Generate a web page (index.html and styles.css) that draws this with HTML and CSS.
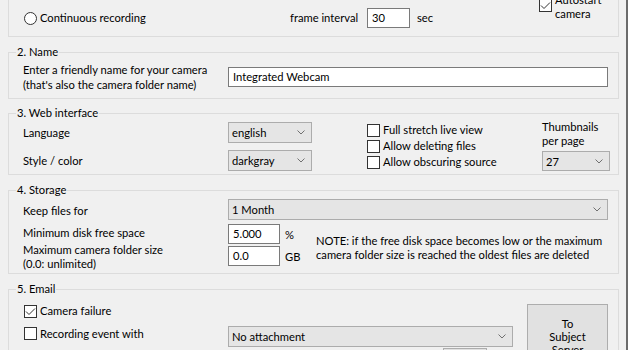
FILE: index.html
```html
<!DOCTYPE html>
<html>

<head>
    <title>Camera settings</title>
    <link rel="stylesheet" href="styles.css">
</head>

<body>
    <div class="panel">

        <!-- 1. Recording (scrolled, top hidden) -->
        <div class="group group-top">
            <div class="rec-row">
                <label class="rec-mode"><span class="radio"></span>Continuous recording</label>
                <span class="frame-label">frame interval</span>
                <span class="field interval">30</span>
                <span class="unit-sec">sec</span>
                <label class="autostart">
                    <span class="box"><svg width="11" height="11" viewBox="0 0 11 11"><polyline points="1,5.5 4,8.5 10,2.5" /></svg></span>
                    <span>Autostart<br>camera</span>
                </label>
            </div>
        </div>

        <!-- 2. Name -->
        <fieldset class="group g-name">
            <legend>2. Name</legend>
            <div class="name-row">
                <div>Enter a friendly name for your camera<br>(that's also the camera folder name)</div>
                <span class="field">Integrated Webcam</span>
            </div>
        </fieldset>

        <!-- 3. Web interface -->
        <fieldset class="group g-web">
            <legend>3. Web interface</legend>
            <div class="web-row">
                <div class="web-left">
                    <span>Language</span>
                    <span class="select">english<svg width="8" height="5" viewBox="0 0 8 5"><polyline points="0.5,0.5 4,4 7.5,0.5" /></svg></span>
                    <span>Style / color</span>
                    <span class="select">darkgray<svg width="8" height="5" viewBox="0 0 8 5"><polyline points="0.5,0.5 4,4 7.5,0.5" /></svg></span>
                </div>
                <div class="checks">
                    <label class="check-line"><span class="box"></span>Full stretch live view</label>
                    <label class="check-line"><span class="box"></span>Allow deleting files</label>
                    <label class="check-line"><span class="box"></span>Allow obscuring source</label>
                </div>
                <div class="thumbs">
                    <div class="thumbs-label">Thumbnails<br>per page</div>
                    <span class="select">27<svg width="8" height="5" viewBox="0 0 8 5"><polyline points="0.5,0.5 4,4 7.5,0.5" /></svg></span>
                </div>
            </div>
        </fieldset>

        <!-- 4. Storage -->
        <fieldset class="group g-storage">
            <legend>4. Storage</legend>
            <div class="storage-grid">
                <span class="keep-label">Keep files for</span>
                <span class="select keep-select">1 Month<svg width="8" height="5" viewBox="0 0 8 5"><polyline points="0.5,0.5 4,4 7.5,0.5" /></svg></span>

                <span class="min-label">Minimum disk free space</span>
                <span class="field">5.000</span>
                <span class="unit">%</span>
                <div class="note">NOTE: if the free disk space becomes low or the maximum<br>camera folder size is reached the oldest files are deleted</div>

                <span class="max-label">Maximum camera folder size<br>(0.0: unlimited)</span>
                <span class="field">0.0</span>
                <span class="unit">GB</span>
            </div>
        </fieldset>

        <!-- 5. Email -->
        <fieldset class="group g-email">
            <legend>5. Email</legend>
            <div class="email-grid">
                <label class="check-line fail-line"><span class="box"><svg width="11" height="11" viewBox="0 0 11 11"><polyline points="1,5.5 4,8.5 10,2.5" /></svg></span>Camera failure</label>
                <button class="subject-btn">To<br>Subject<br>Server</button>
                <label class="check-line event-line"><span class="box"></span>Recording event with</label>
                <span class="select attach-select">No attachment<svg width="8" height="5" viewBox="0 0 8 5"><polyline points="0.5,0.5 4,4 7.5,0.5" /></svg></span>
                <span class="small-btn"></span>
            </div>
        </fieldset>

    </div>
</body>

</html>
```

FILE: styles.css
```css
body {
    margin: 0;
    height: 350px;
    overflow: hidden;
    background-color: #f0f0f0;
    font-family: Lato, "Liberation Sans", sans-serif;
    font-size: 11.2px;
    color: #000;
}

.panel {
    height: 350px;
    overflow: hidden;
    padding: 0 7px 0 8px;
    border-right: 2px solid #6b6b6b;
}

.group {
    border: 1px solid #dcdcdc;
    padding: 0 8px 0 7px;
    margin: 7px 0 0;
    min-width: 0;
}

.group legend {
    padding: 0 1px;
    line-height: 16px;
}

.group-top {
    border-top: none;
    margin-top: 0;
    height: 36px;
}

/* shared controls */

.field {
    display: block;
    height: 20px;
    box-sizing: border-box;
    background-color: #fff;
    border: 1px solid #7a7a7a;
    padding: 0 4px;
    line-height: 18px;
}

.select {
    display: flex;
    align-items: center;
    justify-content: space-between;
    height: 21px;
    box-sizing: border-box;
    background-color: #e5e5e5;
    border: 1px solid #acacac;
    padding: 0 6px 0 3px;
}

.select svg polyline {
    fill: none;
    stroke: #707070;
    stroke-width: 1;
}

.box {
    display: inline-flex;
    align-items: center;
    justify-content: center;
    flex: none;
    width: 13px;
    height: 13px;
    box-sizing: border-box;
    background-color: #fff;
    border: 1px solid #333;
}

.box svg polyline {
    fill: none;
    stroke: #333;
    stroke-width: 1;
}

.radio {
    display: inline-block;
    flex: none;
    width: 13px;
    height: 13px;
    box-sizing: border-box;
    border: 1px solid #333;
    border-radius: 50%;
    background-color: #fff;
}

.check-line {
    display: flex;
    align-items: center;
    gap: 3px;
    line-height: 16px;
}

/* 1. recording */

.rec-row {
    display: flex;
    align-items: flex-start;
    padding-left: 7px;
}

.rec-mode {
    display: flex;
    align-items: center;
    gap: 3px;
    width: 266px;
    margin: 10px 0 0 1px;
    line-height: 16px;
}

.frame-label {
    width: 77px;
    margin-top: 10px;
    line-height: 16px;
}

.interval {
    width: 43px;
    margin-top: 8px;
}

.unit-sec {
    width: 122px;
    margin: 10px 0 0 7px;
    line-height: 16px;
}

.autostart {
    display: flex;
    align-items: flex-start;
    gap: 3px;
    margin-top: -7px;
    line-height: 14px;
}

.autostart .box {
    margin-top: 6px;
}

/* 2. name */

.name-row {
    display: grid;
    grid-template-columns: 205px 380px;
    align-items: center;
    padding: 2px 0 6px 7px;
    line-height: 15px;
}

/* 3. web interface */

.g-web {
    margin-top: 6px;
}

.web-row {
    display: flex;
    align-items: flex-start;
    padding: 1px 0 3px 7px;
}

.web-left {
    display: grid;
    grid-template-columns: 205px 84px;
    row-gap: 7px;
    align-items: center;
    width: 289px;
}

.checks {
    width: 175px;
    margin-left: 55px;
}

.thumbs {
    width: 68px;
}

.thumbs-label {
    margin-top: -2px;
    line-height: 14px;
}

.thumbs .select {
    height: 20px;
    margin-top: 3px;
}

/* 4. storage */

.storage-grid {
    display: grid;
    grid-template-columns: 205px 52px 36px 1fr;
    align-items: start;
    row-gap: 2px;
    padding: 1px 0 2px 7px;
}

.keep-label {
    align-self: center;
}

.keep-select {
    grid-column: 2 / 5;
    width: 380px;
    margin-bottom: 2px;
}

.min-label {
    line-height: 15px;
    padding-top: 1px;
}

.max-label {
    margin-top: -3px;
    line-height: 14px;
}

.unit {
    margin: 3px 0 0 5px;
    line-height: 15px;
}

.note {
    grid-column: 4;
    grid-row: 2 / 4;
    align-self: center;
    line-height: 14px;
    white-space: nowrap;
}

/* 5. email */

.email-grid {
    display: grid;
    grid-template-columns: 205px 285px 1fr;
    align-items: start;
    padding: 6px 0 0 7px;
}

.fail-line {
    grid-column: 1;
    grid-row: 1;
    margin-left: 1px;
}

.event-line {
    grid-column: 1;
    grid-row: 2;
    margin: 7px 0 0 1px;
    line-height: 15px;
}

.attach-select {
    grid-column: 2;
    grid-row: 2;
    margin-top: 7px;
}

.subject-btn {
    grid-column: 3;
    grid-row: 1 / 4;
    width: 81px;
    height: 64px;
    margin: 1px 0 0 14px;
    padding: 0;
    background-color: #e1e1e1;
    border: 1px solid #adadad;
    font-family: inherit;
    font-size: inherit;
    line-height: 13px;
    color: #000;
}

.small-btn {
    grid-column: 2;
    grid-row: 3;
    display: block;
    width: 44px;
    height: 20px;
    margin: 1px 0 0 215px;
    box-sizing: border-box;
    background-color: #e1e1e1;
    border: 1px solid #adadad;
}
```
